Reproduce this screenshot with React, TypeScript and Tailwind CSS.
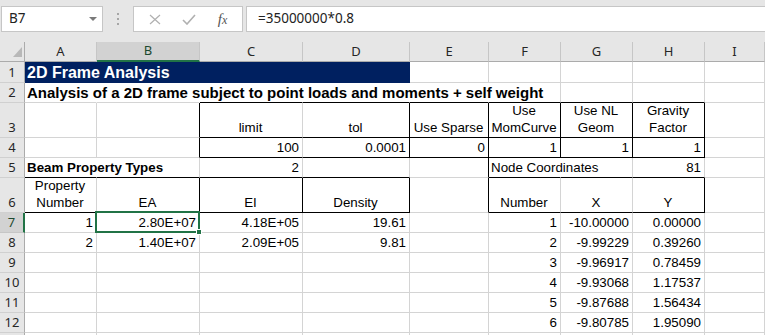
import React from 'react';

type Cell = {
  v?: string | string[];
  a?: 'l' | 'r' | 'c';
  r?: 'k' | 'x' | 'n'; // right border: black / hidden by overflow / navy fill
  b?: 'k' | 'n';
  span?: number;
  cls?: string;
  sel?: boolean;
};

const e: Cell = {};
const n = (v: string, extra: Partial<Cell> = {}): Cell => ({ v, a: 'r', ...extra });
const c = (v: string | string[], extra: Partial<Cell> = {}): Cell => ({ v, a: 'c', ...extra });

const COLS = ['A', 'B', 'C', 'D', 'E', 'F', 'G', 'H', 'I'];

const rows: Cell[][] = [
  // 1
  [
    { v: '2D Frame Analysis', span: 4, r: 'n', b: 'n', cls: 'bg-[#002060] text-white font-bold text-[16px]' },
    e, e, e, e, e,
  ],
  // 2
  [
    { v: 'Analysis of a 2D frame subject to point loads and moments + self weight', r: 'x', cls: 'font-bold text-[15px]' },
    { r: 'x' },
    { r: 'x', b: 'k' },
    { r: 'x', b: 'k' },
    { r: 'x', b: 'k' },
    { b: 'k' },
    { b: 'k' },
    { b: 'k' },
    e,
  ],
  // 3
  [
    e,
    { r: 'k' },
    c('limit', { b: 'k' }),
    c('tol', { r: 'k', b: 'k' }),
    c('Use Sparse', { r: 'k', b: 'k' }),
    c(['Use', 'MomCurve'], { r: 'k', b: 'k' }),
    c(['Use NL', 'Geom'], { r: 'k', b: 'k' }),
    c(['Gravity', 'Factor'], { r: 'k', b: 'k' }),
    e,
  ],
  // 4
  [
    e,
    { r: 'k' },
    n('100', { b: 'k' }),
    n('0.0001', { r: 'k', b: 'k' }),
    n('0', { r: 'k', b: 'k' }),
    n('1', { r: 'k', b: 'k' }),
    n('1', { r: 'k', b: 'k' }),
    n('1', { r: 'k', b: 'k' }),
    e,
  ],
  // 5
  [
    { v: 'Beam Property Types', r: 'x', b: 'k', cls: 'font-bold' },
    { b: 'k' },
    n('2', { b: 'k' }),
    { b: 'k' },
    { r: 'k' },
    { v: 'Node Coordinates', r: 'x', b: 'k' },
    { b: 'k' },
    n('81', { b: 'k' }),
    e,
  ],
  // 6
  [
    c(['Property', 'Number'], { b: 'k' }),
    c('EA', { r: 'k', b: 'k' }),
    c('EI', { r: 'k', b: 'k' }),
    c('Density', { r: 'k', b: 'k' }),
    { r: 'k' },
    c('Number', { b: 'k' }),
    c('X', { b: 'k' }),
    c('Y', { r: 'k', b: 'k' }),
    e,
  ],
  // 7
  [n('1'), n('2.80E+07', { sel: true }), n('4.18E+05'), n('19.61'), e, n('1'), n('-10.00000'), n('0.00000'), e],
  // 8
  [n('2'), n('1.40E+07'), n('2.09E+05'), n('9.81'), e, n('2'), n('-9.99229'), n('0.39260'), e],
  [e, e, e, e, e, n('3'), n('-9.96917'), n('0.78459'), e],
  [e, e, e, e, e, n('4'), n('-9.93068'), n('1.17537'), e],
  [e, e, e, e, e, n('5'), n('-9.87688'), n('1.56434'), e],
  [e, e, e, e, e, n('6'), n('-9.80785'), n('1.95090'), e],
  [e, e, e, e, e, e, e, e, e],
];

function SheetCell({ cell }: { cell: Cell }) {
  const right =
    cell.r === 'k'
      ? 'border-r-black'
      : cell.r === 'x'
      ? 'border-r-transparent'
      : cell.r === 'n'
      ? 'border-r-[#002060]'
      : 'border-r-[#d4d4d4]';
  const bottom =
    cell.b === 'k' ? 'border-b-black' : cell.b === 'n' ? 'border-b-[#002060]' : 'border-b-[#d4d4d4]';
  const align =
    cell.a === 'c'
      ? 'justify-center text-center'
      : cell.a === 'r'
      ? 'justify-end text-right'
      : 'justify-start text-left';
  const span = cell.span === 4 ? 'col-span-4' : '';
  const lines = Array.isArray(cell.v) ? cell.v : cell.v ? [cell.v] : [];

  return (
    <div
      className={`relative flex items-end border-r border-b ${right} ${bottom} ${align} ${span} pl-[2px] pr-[3px] pb-px ${cell.cls ?? ''}`}
    >
      {lines.length > 0 && (
        <div className="relative z-10 whitespace-nowrap leading-[16.5px]">
          {lines.map((l, i) => (
            <div key={i}>{l}</div>
          ))}
        </div>
      )}
      {cell.sel && (
        <div className="absolute -left-[2px] -top-[2px] -right-[1px] -bottom-[1px] z-20 border-2 border-[#217346]">
          <div className="absolute -right-[4px] -bottom-[4px] w-[6px] h-[6px] bg-[#217346] border border-white" />
        </div>
      )}
    </div>
  );
}

function FormulaBar() {
  return (
    <div className="h-[42px] bg-[#e6e6e6] flex items-start pt-[6px] font-['Noto_Sans',sans-serif] text-[13.5px] text-[#222]">
      {/* Name box */}
      <div className="ml-px w-[102px] h-[26px] bg-white border border-[#c6c6c6] flex items-center justify-between pl-[7px] pr-[5px]">
        <span className="leading-none">B7</span>
        <svg width="8" height="4" viewBox="0 0 8 4">
          <path d="M0 0h8L4 4z" fill="#7a7a7a" />
        </svg>
      </div>
      {/* grip */}
      <div className="w-[30px] h-[26px] flex flex-col items-center justify-center gap-[3px]">
        <span className="w-[2px] h-[2px] bg-[#a6a6a6]" />
        <span className="w-[2px] h-[2px] bg-[#a6a6a6]" />
        <span className="w-[2px] h-[2px] bg-[#a6a6a6]" />
      </div>
      {/* buttons */}
      <div className="w-[110px] h-[26px] bg-white border border-[#c6c6c6] flex items-center justify-around px-[4px]">
        <svg width="12" height="11" viewBox="0 0 12 11">
          <path d="M1 1l10 9M11 1L1 10" stroke="#b0b0b0" strokeWidth="1.2" fill="none" />
        </svg>
        <svg width="14" height="11" viewBox="0 0 14 11">
          <path d="M1 6l4 4 8-9" stroke="#b0b0b0" strokeWidth="1.6" fill="none" />
        </svg>
        <span className="font-['Liberation_Serif',serif] italic text-[15px] text-[#555] leading-none">
          f<span className="text-[12px]">x</span>
        </span>
      </div>
      {/* formula */}
      <div className="ml-[3px] flex-1 h-[26px] bg-white border border-r-0 border-[#c6c6c6] flex items-center pl-[11px]">
        <span className="leading-none">=35000000*0.8</span>
      </div>
    </div>
  );
}

export default function App() {
  return (
    <div className="w-[765px] h-[335px] overflow-hidden bg-white font-['Liberation_Sans',Arial,sans-serif] text-[13.33px] text-black">
      <FormulaBar />
      <div className="grid grid-cols-[25px_72px_103px_103px_107px_79px_72px_72px_72px_1fr] grid-rows-[20px_21px_20px_35px_20px_20px_35px_20px_20px_20px_20px_20px_20px_20px]">
        {/* corner */}
        <div className="relative bg-[#e6e6e6] border-r border-b border-r-[#ababab] border-b-[#ababab]">
          <svg className="absolute right-[2px] bottom-[4px]" width="9" height="10" viewBox="0 0 9 10">
            <path d="M9 0v10H0z" fill="#b8b8b8" />
          </svg>
        </div>
        {COLS.map((col) =>
          col === 'B' ? (
            <div
              key={col}
              className="flex items-center justify-center bg-[#d2d2d2] border-r border-r-[#c6c6c6] border-b-2 border-b-[#217346] font-['Noto_Sans',sans-serif] text-[13px] text-[#1d4a30]"
            >
              {col}
            </div>
          ) : (
            <div
              key={col}
              className="flex items-center justify-center bg-[#e6e6e6] border-r border-b border-r-[#c6c6c6] border-b-[#ababab] font-['Noto_Sans',sans-serif] text-[13px] text-[#262626]"
            >
              {col}
            </div>
          )
        )}
        {rows.map((row, ri) => (
          <React.Fragment key={ri}>
            {ri === 6 ? (
              <div className="flex items-end justify-center pb-px leading-[18px] bg-[#d2d2d2] border-r-2 border-b border-r-[#217346] border-b-[#c6c6c6] font-['Noto_Sans',sans-serif] text-[13px] text-[#1d4a30]">
                {ri + 1}
              </div>
            ) : (
              <div className="flex items-end justify-center pb-px leading-[18px] bg-[#e6e6e6] border-r border-b border-r-[#ababab] border-b-[#d0d0d0] font-['Noto_Sans',sans-serif] text-[13px] text-[#262626]">
                {ri < 12 ? ri + 1 : ''}
              </div>
            )}
            {row.map((cell, ci) => (
              <SheetCell key={ci} cell={cell} />
            ))}
          </React.Fragment>
        ))}
      </div>
    </div>
  );
}
